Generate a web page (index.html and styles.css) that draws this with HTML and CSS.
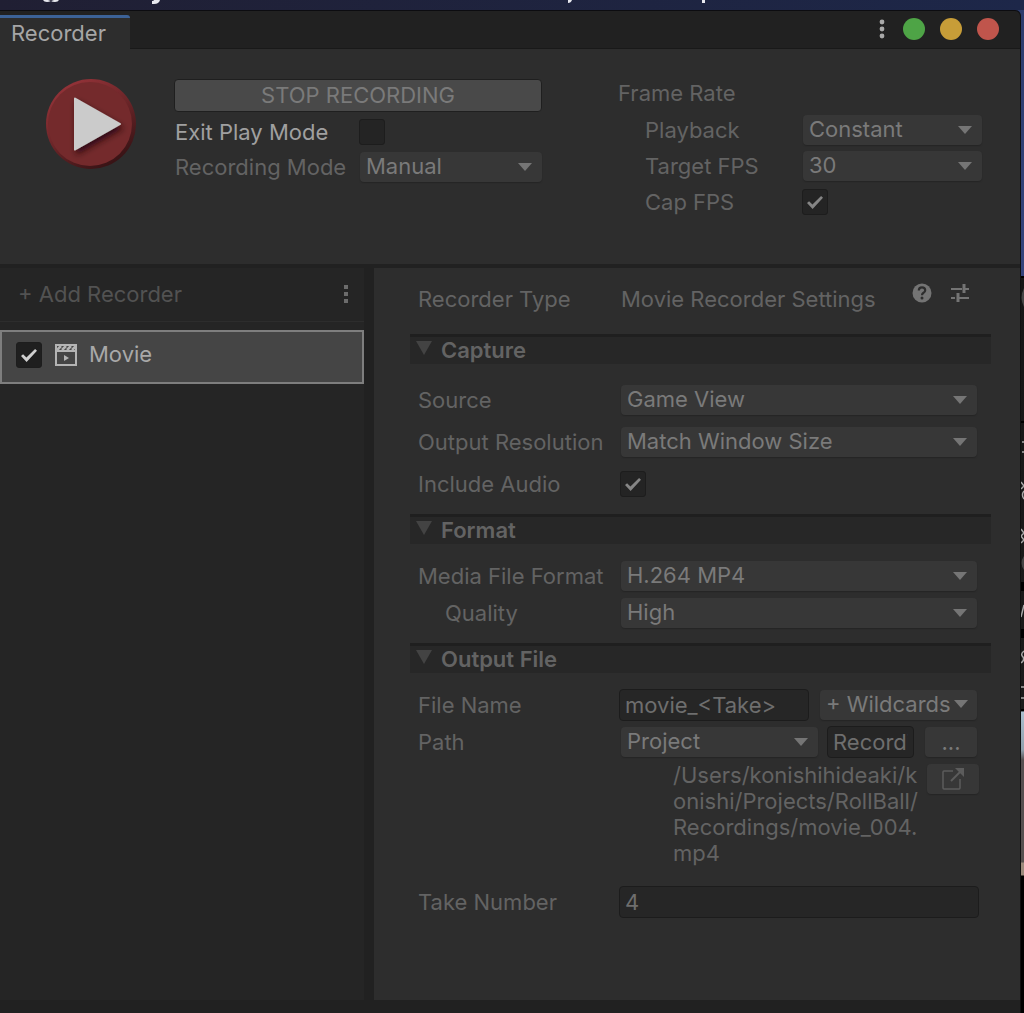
FILE: index.html
```html
<!DOCTYPE html>
<html lang="en">
<head>
  <meta charset="UTF-8" />
  <meta name="viewport" content="width=device-width, initial-scale=1.0"/>
  <title>Recorder</title>
  <link rel="stylesheet" href="styles.css">
</head>
<body>
  <!-- Slivers of the desktop above and beside the window -->
  <div class="desktop-top">
    <svg width="720" height="10" viewBox="0 0 720 10" fill="#e8e9ee" aria-hidden="true">
      <path d="M43 0h5l3 1 3-1h5q-1 2-4 2-3 0-4-1-2 1-4 1-3 0-4-2z"/>
      <path d="M154 0h6q-1 4-6 4h-2V1q2 0 2-1z"/>
      <path d="M568 0h4q-1 3-4 3z"/>
      <path d="M702 0h3v3h-3z"/>
    </svg>
  </div>
  <svg class="desktop-side" width="3" height="880" viewBox="0 0 3 880" aria-hidden="true">
    <path d="M0 277h3M0 422h3M0 710h3" stroke="#000" stroke-width="2"/>
    <path d="M0 582h3v9H0zM0 629h3v9H0z" fill="#000"/>
    <path d="M3 288q-5 10 0 19zM3 556q-5 7 0 14z" fill="#454545"/>
    <path d="M1 442h2M1 452h2M0 482l3 4-3 3M3 491q-3 4 0 8M0 529l3 4-3 3 3 4-3 3M0 617l3-12M3 651q-4 3-1 6 2 3-2 6M0 687h3M0 698h3" fill="none" stroke="#a8a8a8" stroke-width="1.500"/>
  </svg>

  <main class="window">
    <header class="tab-bar">
      <div class="tab">Recorder</div>
      <div class="window-buttons">
        <button class="icon-button" aria-label="Menu">
          <svg width="6" height="20" viewBox="0 0 6 20" fill="#a9a9a9"><circle cx="3" cy="3" r="2.400"/><circle cx="3" cy="10" r="2.400"/><circle cx="3" cy="17" r="2.400"/></svg>
        </button>
        <button class="light green" aria-label="Zoom"></button>
        <button class="light yellow" aria-label="Minimize"></button>
        <button class="light red" aria-label="Close"></button>
      </div>
    </header>

    <section class="controls">
      <button class="play-button" aria-label="Record">
        <svg width="94" height="94" viewBox="0 0 94 94">
          <defs>
            <linearGradient id="rim" x1="0.2" y1="0" x2="0.8" y2="1">
              <stop offset="0" stop-color="#98343a"/>
              <stop offset="0.5" stop-color="#6a2528"/>
              <stop offset="1" stop-color="#301012"/>
            </linearGradient>
            <filter id="shadow" x="-30%" y="-30%" width="160%" height="160%">
              <feDropShadow dx="2" dy="4" stdDeviation="3" flood-color="#200608" flood-opacity="0.8"/>
            </filter>
          </defs>
          <circle cx="47" cy="47" r="45" fill="url(#rim)"/>
          <circle cx="46" cy="47" r="42" fill="#742a2c"/>
          <path d="M31 21.500L76 47 31 72.500z" fill="#cbcbcb" stroke="#cbcbcb" stroke-width="2" stroke-linejoin="round" filter="url(#shadow)"/>
        </svg>
      </button>

      <div class="record-options">
        <button class="stop-button">STOP RECORDING</button>
        <div class="option">
          <label class="bright" for="exit-play">Exit Play Mode</label>
          <input type="checkbox" id="exit-play">
        </div>
        <div class="option">
          <label for="recording-mode">Recording Mode</label>
          <span class="dropdown"><select id="recording-mode"><option>Manual</option></select></span>
        </div>
      </div>

      <div class="frame-rate">
        <div class="frame-title">Frame Rate</div>
        <div class="option">
          <label for="playback">Playback</label>
          <span class="dropdown"><select id="playback"><option>Constant</option></select></span>
        </div>
        <div class="option">
          <label for="target-fps">Target FPS</label>
          <span class="dropdown"><select id="target-fps"><option>30</option></select></span>
        </div>
        <div class="option">
          <label for="cap-fps">Cap FPS</label>
          <input type="checkbox" id="cap-fps" checked>
        </div>
      </div>
    </section>

    <div class="panes">
      <aside class="recorder-list">
        <div class="list-header">
          <button class="add-button">+ Add Recorder</button>
          <button class="icon-button" aria-label="Recorder list menu">
            <svg width="4" height="18" viewBox="0 0 4 18" fill="#6c6c6c"><path d="M0 0h4v4H0zM0 7h4v4H0zM0 14h4v4H0z"/></svg>
          </button>
        </div>
        <div class="list-item">
          <input type="checkbox" id="movie" checked>
          <svg width="24" height="24" viewBox="0 0 24 24" fill="none" stroke="#b4b4b4" stroke-width="2" aria-hidden="true">
            <path d="M2 2h20v20H2zM2 8h20"/>
            <path d="M3 7l4-4M8 7l4-4M13 7l4-4M18 7l4-4" stroke-width="2.500"/>
            <path d="M10 12l5 3-5 3z" fill="#b4b4b4" stroke="none"/>
          </svg>
          <label for="movie">Movie</label>
        </div>
      </aside>

      <section class="settings">
        <div class="row type-row">
          <span>Recorder Type</span>
          <div class="type-value">
            <span>Movie Recorder Settings</span>
            <div class="type-icons">
              <button class="icon-button" aria-label="Help">
                <svg width="20" height="20" viewBox="0 0 20 20">
                  <circle cx="10" cy="10" r="9.500" fill="#747474"/>
                  <path d="M6.800 7.500q0-3.200 3.200-3.200t3.200 2.900q0 1.600-1.700 2.600-1.500 0.900-1.500 2.400" fill="none" stroke="#2d2d2d" stroke-width="2.200"/>
                  <circle cx="10" cy="15" r="1.500" fill="#2d2d2d"/>
                </svg>
              </button>
              <button class="icon-button" aria-label="Presets">
                <svg width="20" height="20" viewBox="0 0 20 20" fill="none" stroke="#747474">
                  <path d="M1 6h11M15 6h4M1 15h4M8 15h11" stroke-width="2"/>
                  <path d="M14 1v9M8 10v9" stroke-width="3"/>
                </svg>
              </button>
            </div>
          </div>
        </div>

        <h2>Capture</h2>
        <div class="rows loose">
          <div class="row">
            <label for="source">Source</label>
            <span class="dropdown"><select id="source"><option>Game View</option></select></span>
          </div>
          <div class="row">
            <label for="resolution">Output Resolution</label>
            <span class="dropdown"><select id="resolution"><option>Match Window Size</option></select></span>
          </div>
          <div class="row">
            <label for="audio">Include Audio</label>
            <input type="checkbox" id="audio" checked>
          </div>
        </div>

        <h2>Format</h2>
        <div class="rows">
          <div class="row">
            <label for="format">Media File Format</label>
            <span class="dropdown"><select id="format"><option>H.264 MP4</option></select></span>
          </div>
          <div class="row">
            <label class="indent" for="quality">Quality</label>
            <span class="dropdown"><select id="quality"><option>High</option></select></span>
          </div>
        </div>

        <h2>Output File</h2>
        <div class="rows">
          <div class="row">
            <label for="file-name">File Name</label>
            <div class="field-group">
              <input type="text" class="grow" id="file-name" value="movie_&lt;Take&gt;">
              <button class="button wildcards">+ Wildcards</button>
            </div>
          </div>
          <div class="row">
            <label for="path">Path</label>
            <div class="field-group">
              <span class="dropdown grow"><select id="path"><option>Project</option></select></span>
              <input type="text" class="folder" aria-label="Folder" value="Recordings">
              <button class="button small" aria-label="Browse">...</button>
            </div>
          </div>
          <div class="full-path">
            <p>/Users/konishihideaki/konishi/Projects/RollBall/Recordings/movie_004.mp4</p>
            <button class="button small" aria-label="Open folder">
              <svg width="24" height="24" viewBox="0 0 24 24" fill="none" stroke="#5c5c5c" stroke-width="1.500">
                <path d="M12 4H3q-1 0-1 1v16q0 1 1 1h15q1 0 1-1v-9"/>
                <path d="M10 14L21 3" stroke-width="2"/>
                <path d="M14 1h9v9l-3-3-3-3z" fill="#5c5c5c" stroke="none"/>
              </svg>
            </button>
          </div>
          <div class="row take-row">
            <label for="take">Take Number</label>
            <input type="text" id="take" value="4">
          </div>
        </div>
      </section>
    </div>
  </main>
</body>
</html>
```
FILE: styles.css
```css
* {
  box-sizing: border-box;
}
body {
  position: relative;
  margin: 0;
  min-height: 100vh;
  display: flex;
  flex-direction: column;
  padding-right: 3px;
  font-family: Inter, "Liberation Sans", sans-serif;
  font-size: 22px;
  line-height: 26px;
  color: #636363;
  background: linear-gradient(#2c3c6c 0, #34447c 276px, #161616 277px, #1b1b1b 711px, #a9bfce 712px, #8fa0ac 750px, #554f50 760px, #55504f 862px, #9b8b7c 863px, #9b8b7c 875px, #000 876px);
}
button, input, select {
  font: inherit;
  color: inherit;
  margin: 0;
  padding: 0;
  border: none;
  background: none;
}
svg {
  display: block;
}
.desktop-top {
  height: 10px;
  margin-right: -3px;
  background: linear-gradient(90deg, #201f33, #1d2749);
}
.desktop-side {
  position: absolute;
  top: 0;
  right: 0;
}
.window {
  flex: 1;
  display: flex;
  flex-direction: column;
  background: #212121;
  border-top: 1px solid #0c0c10;
  border-right: 1px solid #101010;
  border-top-right-radius: 6px;
}

/* Tab bar */
.tab-bar {
  display: flex;
  justify-content: space-between;
  height: 38px;
  border-bottom: 1px solid #191919;
}
.tab {
  margin: 4px 0 -1px;
  padding: 2px 24px 0 11px;
  border-top: 3px solid #3c6296;
  border-radius: 0 3px 0 0;
  background: #2d2d2d;
  color: #a6a6a6;
}
.window-buttons {
  display: flex;
  align-items: center;
  gap: 15px;
  padding: 0 21px 2px 0;
}
.window-buttons .icon-button {
  margin-right: 3px;
}
.light {
  width: 22px;
  height: 22px;
  border-radius: 50%;
}
.green { background: #4ea446; }
.yellow { background: #c79d38; }
.red { background: #c0554c; }

/* Recording controls */
.controls {
  display: flex;
  align-items: flex-start;
  height: 215px;
  padding: 28px 38px 0 44px;
  background: #2d2d2d;
}
.record-options {
  flex: 1;
  max-width: 368px;
  margin: 2px 0 0 36px;
}
.stop-button {
  width: 100%;
  height: 33px;
  padding-bottom: 2px;
  border: 1px solid #1f1f1f;
  border-radius: 4px;
  background: #494949;
  color: #7a7a7a;
}
.option {
  display: grid;
  grid-template-columns: 185px 1fr;
  align-items: center;
  height: 30px;
  margin-top: 6px;
}
.record-options .option {
  margin: 5px 0 0 1px;
}
.bright {
  color: #a0a0a0;
}
.frame-rate {
  width: 364px;
  margin: 3px 0 0 auto;
}
.frame-rate .option {
  grid-template-columns: 158px 1fr;
  padding-left: 27px;
}
.frame-rate .frame-title + .option {
  margin-top: 9px;
}

/* Shared fields */
.dropdown {
  position: relative;
  display: block;
  min-width: 0;
}
.dropdown select {
  display: block;
  width: 100%;
  height: 30px;
  padding: 0 32px 2px 6px;
  appearance: none;
  border-radius: 4px;
  background: #373737;
  box-shadow: 0 1px 1px #252525;
  color: #7a7a7a;
}
.dropdown::after,
.wildcards::after {
  content: "";
  width: 14px;
  height: 8px;
  background: #757575;
  clip-path: polygon(0 0, 100% 0, 50% 100%);
}
.dropdown::after {
  position: absolute;
  right: 10px;
  top: 11px;
  pointer-events: none;
}
input[type="text"] {
  min-width: 0;
  height: 32px;
  margin: -1px -2px;
  padding: 0 5px;
  border: 1px solid #1c1c1c;
  border-radius: 4px;
  background: #262626;
  color: #6e6e6e;
}
input[type="checkbox"] {
  flex: none;
  position: relative;
  width: 26px;
  height: 26px;
  margin-left: -1px;
  appearance: none;
  border: 1px solid #1d1d1d;
  border-radius: 3px;
  background: #242424;
}
input[type="checkbox"]:checked::after {
  content: "";
  position: absolute;
  inset: 6px 4px 5px 4px;
  background: #858585;
  clip-path: polygon(0 54%, 13% 41%, 34% 66%, 88% 0, 100% 13%, 35% 100%);
}
.button {
  height: 30px;
  border-radius: 4px;
  background: #373737;
  box-shadow: 0 1px 1px #252525;
  color: #7a7a7a;
}

/* Panes */
.panes {
  flex: 1;
  display: flex;
  padding: 4px 0 13px;
}
.recorder-list {
  width: 364px;
  flex: none;
  margin-right: 10px;
  background: #252525;
}
.list-header {
  display: flex;
  align-items: center;
  justify-content: space-between;
  height: 54px;
  padding: 0 16px 2px 18px;
  border-bottom: 1px solid #2d2d2d;
}
.add-button {
  color: #525252;
}
.list-item {
  display: flex;
  align-items: center;
  height: 54px;
  margin-top: 8px;
  padding: 0 15px 4px;
  border: 2px solid #7e7e7e;
  background: #454545;
  color: #a9a9a9;
}
.list-item svg {
  margin: 0 11px 0 12px;
}
.list-item label {
  padding-bottom: 2px;
}
.list-item input[type="checkbox"] {
  background: #1f1f1f;
}
.list-item input[type="checkbox"]::after {
  background: #d0d0d0;
}

/* Settings */
.settings {
  flex: 1;
  min-width: 0;
  padding: 16px 29px 0 36px;
  background: #2d2d2d;
}
.row {
  display: grid;
  grid-template-columns: 203px 1fr;
  align-items: center;
  min-height: 30px;
  padding: 0 14px 0 8px;
}
.type-value {
  display: flex;
  justify-content: space-between;
}
.type-icons {
  display: flex;
  align-items: flex-start;
  gap: 18px;
  margin-top: -3px;
  padding-right: 7px;
}
.settings h2 {
  display: flex;
  align-items: center;
  gap: 9px;
  height: 30px;
  margin: 20px 0 17px;
  padding: 0 6px 2px;
  border-top: 3px solid #1f1f1f;
  background: #272727;
  font-size: 22px;
  font-weight: 600;
}
.settings h2::before {
  content: "";
  width: 16px;
  height: 14px;
  margin-bottom: 3px;
  background: #434343;
  clip-path: polygon(0 0, 100% 0, 50% 100%);
}
.rows {
  display: flex;
  flex-direction: column;
  gap: 7px;
}
.loose {
  gap: 12px;
  padding-top: 4px;
}
.rows + h2 {
  margin-top: 15px;
}
.indent {
  padding-left: 27px;
}
.field-group {
  display: flex;
  gap: 11px;
  min-width: 0;
}
.field-group input[type="text"] {
  margin-right: 0;
}
.field-group .grow {
  flex: 1;
  width: 0;
}
.wildcards {
  display: flex;
  flex: none;
  align-items: center;
  justify-content: space-between;
  width: 157px;
  padding: 0 9px 2px 6px;
}
.field-group .folder {
  width: 87px;
}
.small {
  width: 52px;
  flex: none;
}
.small svg {
  margin: 0 auto;
}
.full-path {
  display: flex;
  gap: 6px;
  padding: 0 12px 0 263px;
}
.full-path p {
  flex: 1;
  margin: -2px 0 0;
  word-break: break-all;
}
.take-row {
  margin-top: 14px;
}
```
